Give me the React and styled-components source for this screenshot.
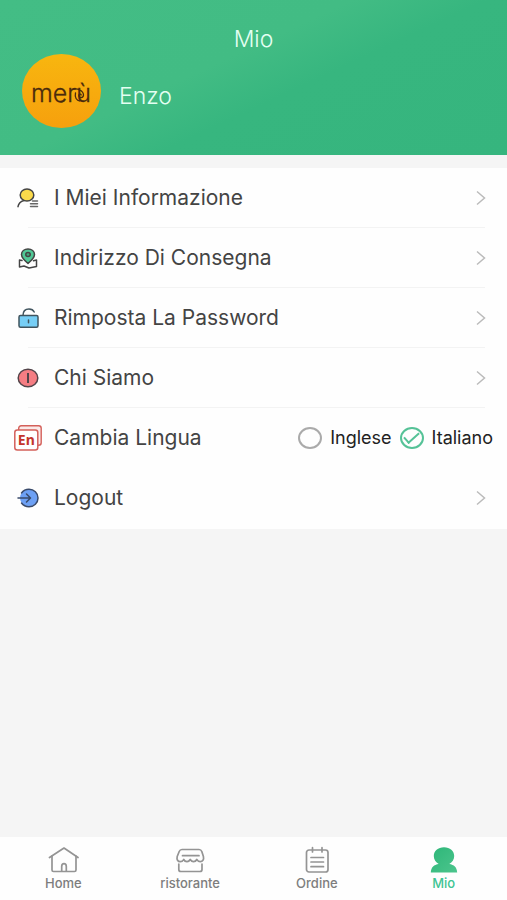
import React, {useState} from 'react'
import styled, {createGlobalStyle} from 'styled-components'


const GlobalStyle = createGlobalStyle`
  * {
    box-sizing: border-box;
  }
  body {
    margin: 0;
    background-color: #f5f5f5;
    font-family: Inter, "Liberation Sans", sans-serif;
    color: #444;
  }
`

const Page = styled.div`
  min-height: 100vh;
  display: flex;
  flex-direction: column;
`

const Header = styled.header`
  padding: 24px 22px 27px;
  background: linear-gradient(155deg, #43bd85 0%, #42bc84 42%, #37b67f 58%, #36b57e 100%);
  color: #e4fff2;
`

const Title = styled.h1`
  margin: 0;
  font-size: 23px;
  line-height: 30px;
  font-weight: 300;
  text-align: center;
`

const Profile = styled.div`
  display: flex;
  align-items: center;
  gap: 18px;
`

const UserName = styled.span`
  padding-top: 10px;
  font-size: 23px;
  line-height: 30px;
  font-weight: 300;
`

const Menu = styled.main`
  margin-top: 13px;
  padding-bottom: 1px;
  background-color: #fefefe;
`

const Row = styled.div`
  display: flex;
  align-items: center;
  width: 100%;
  height: 60px;
  padding: 0 14px;
  color: inherit;
  text-decoration: none;
`

const RowButton = styled(Row)`
  border: 0;
  background: none;
  font-family: inherit;
  text-align: left;
  cursor: pointer;
`

const IconBox = styled.span`
  display: flex;
  justify-content: center;
  width: 28px;
  margin-right: 12px;
`

const Label = styled.span`
  flex: 1;
  font-size: 21px;
  line-height: 28px;
  white-space: nowrap;
`

const ArrowBox = styled.span`
  display: flex;
  margin-right: 6px;
`

const Divider = styled.hr`
  height: 1px;
  margin: -1px 22px 0 28px;
  border: 0;
  background-color: #f3f3f3;
`

const Languages = styled.div`
  display: flex;
  gap: 8px;
`

const Language = styled.label`
  display: flex;
  align-items: center;
  gap: 8px;
  font-size: 18px;
  line-height: 24px;
  color: #222;
  cursor: pointer;
`

const Radio = styled.input`
  appearance: none;
  display: flex;
  justify-content: center;
  align-items: center;
  width: 24px;
  height: 22px;
  margin: 0;
  border: 2px solid #aaa;
  border-radius: 50%;

  &:checked {
    border-color: #55c297;
  }
  &:checked::after {
    content: "";
    width: 13px;
    height: 6px;
    margin-bottom: 4px;
    border: solid #55c297;
    border-width: 0 0 2px 2px;
    transform: rotate(-42deg);
  }
`

const TabBar = styled.nav`
  display: flex;
  height: 63px;
  margin-top: auto;
  background-color: #fefefe;
`

const Tab = styled.a`
  flex: 1;
  display: flex;
  flex-direction: column;
  align-items: center;
  padding-top: 9px;
  font-size: 13px;
  line-height: 18px;
  font-weight: 500;
  color: ${props => props.$active ? '#3fc493' : '#7d7d7d'};
  text-decoration: none;
`

const Logo = () => (
    <svg width="79" height="74" viewBox="0 0 79 74" role="img" aria-label="menù">
        <defs>
            <linearGradient id="logoFill" x1="0" y1="0" x2="0" y2="1">
                <stop offset="0" stopColor="#f8b60f"/>
                <stop offset="1" stopColor="#f6a00d"/>
            </linearGradient>
        </defs>
        <ellipse cx="39.5" cy="37" rx="39.5" ry="37" fill="url(#logoFill)"/>
        <text x="9" y="47.5" fontFamily="Inter, sans-serif" fontSize="25" fontWeight="300" fill="#4a2a0c" stroke="#4a2a0c" strokeWidth=".3">merù</text>
        <g fill="none" stroke="#4a2a0c" strokeLinecap="round">
            <path d="M51.5 35.2C55 34 61.5 36.5 61.5 41C61.5 44.2 56.8 44.4 56.8 41.6C56.8 40 58.8 39.6 59.2 41" strokeWidth="1.3"/>
            <path d="M53.5 39C52.5 43.5 54.5 46.5 58 47" strokeWidth="1.3"/>
        </g>
    </svg>
)

const UserInfoIcon = () => (
    <svg width="22" height="20" viewBox="0 0 22 20" fill="none" stroke="#444" strokeWidth="1.5" strokeLinecap="round">
        <ellipse cx="10" cy="7" rx="6.8" ry="6" fill="#fbda4b"/>
        <path d="M7 12.5C3.5 13.5 1.5 15.5 1 18.7"/>
        <path d="M15.5 13H20.5M13.5 15.8H20.5M13.5 18.5H20.5" stroke="#666"/>
    </svg>
)

const AddressIcon = () => (
    <svg width="20" height="21" viewBox="0 0 20 21" fill="none" stroke="#444" strokeWidth="1.5" strokeLinejoin="round" strokeLinecap="round">
        <path d="M4 12.5L1.5 12V19L6 18L11 20L18.5 18.5V12L15.5 12.8"/>
        <path d="M10 15.5C6.5 12.5 3.5 9.8 3.5 6.5C3.5 3.3 6.3 1 10 1S16.5 3.3 16.5 6.5C16.5 9.8 13.5 12.5 10 15.5Z" fill="#50c896"/>
        <ellipse cx="10" cy="6.5" rx="2.2" ry="2" fill="#42a97d"/>
    </svg>
)

const LockIcon = () => (
    <svg width="21" height="20" viewBox="0 0 21 20" fill="none" stroke="#40545e" strokeWidth="1.5" strokeLinejoin="round" strokeLinecap="round">
        <path d="M5 7.5C5 3.5 7.2 1 11 1C13.5 1 15.3 2 16.2 4"/>
        <rect x="1" y="7.5" width="19" height="11.7" rx="1.5" fill="#76cef5"/>
        <path d="M10.5 12V14.8"/>
    </svg>
)

const AboutIcon = () => (
    <svg width="22" height="20" viewBox="0 0 22 20" stroke="#53444a" strokeWidth="1.5">
        <ellipse cx="11" cy="10" rx="9.8" ry="8.8" fill="#f57d83"/>
        <path d="M11 5V15" strokeWidth="2"/>
    </svg>
)

const LanguageIcon = () => (
    <svg width="28" height="26" viewBox="0 0 28 26">
        <rect x="4.7" y=".8" width="22.5" height="19.5" rx="2.5" fill="#fbeae9" stroke="#d4605a" strokeWidth="1.4"/>
        <rect x=".8" y="5" width="23" height="20" rx="2.5" fill="#fff" stroke="#d4605a" strokeWidth="1.5"/>
        <text x="12.3" y="19.7" textAnchor="middle" fontFamily="Noto Sans, sans-serif" fontSize="14" fontWeight="700" fill="#c4352c">En</text>
    </svg>
)

const LogoutIcon = () => (
    <svg width="22" height="20" viewBox="0 0 22 20" fill="none" stroke="#38496a" strokeWidth="1.5" strokeLinejoin="round" strokeLinecap="round">
        <ellipse cx="12" cy="10" rx="9" ry="8.5" fill="#6da0f4" stroke="none"/>
        <path d="M4.5 5C6.2 2.6 9 1.2 12 1.2C17 1.2 21 5 21 10S17 18.8 12 18.8C9 18.8 6.2 17.4 4.5 15"/>
        <path d="M1 10H13M9.5 6L13.5 10L9.5 14"/>
    </svg>
)

const Arrow = () => (
    <svg width="12" height="16" viewBox="0 0 12 16" fill="none" stroke="#bbb" strokeWidth="1.5">
        <path d="M2 1.5L9.5 8L2 14.5"/>
    </svg>
)

const HomeIcon = () => (
    <svg width="32" height="28" viewBox="0 0 32 28" fill="none" stroke="#949494" strokeWidth="1.7" strokeLinejoin="round" strokeLinecap="round">
        <path d="M2.5 11.5L17 2L31 11.5"/>
        <path d="M5 10V24Q5 25.5 6.5 25.5H27.5Q29 25.5 29 24V10"/>
        <path d="M14.7 25V20.5Q14.7 17.7 17 17.7T19.3 20.5V25"/>
    </svg>
)

const ShopIcon = () => (
    <svg width="32" height="28" viewBox="0 0 32 28" fill="none" stroke="#949494" strokeWidth="1.7" strokeLinejoin="round" strokeLinecap="round">
        <path d="M8 3.5H25Q27 3.5 27.8 5.5L29.4 10.5C30.2 13.8 28.5 15.7 26.3 15.7C24.5 15.7 23.5 14.5 22.8 13.5C22 15 21 15.7 19.5 15.7C18 15.7 17 14.7 16.2 13.5C15.5 14.7 14.5 15.7 13 15.7C11.5 15.7 10.3 14.7 9.7 13.5C9 15 7.8 15.7 6.2 15.7C3.8 15.7 2.5 13.5 3.2 10.5L5.2 5.5Q6 3.5 8 3.5Z"/>
        <path d="M8.5 9.7H25M4.8 18V23.5Q4.8 25.5 6.8 25.5H26Q28 25.5 28 23.5V18"/>
    </svg>
)

const OrderIcon = () => (
    <svg width="32" height="28" viewBox="0 0 32 28" fill="none" stroke="#949494" strokeWidth="1.7" strokeLinecap="round">
        <rect x="5.5" y="4" width="21.5" height="22" rx="2.5"/>
        <path d="M11.5 1.7V6M21 1.7V6M10 11.5H22.5M10 16H22.5M10 20.7H22.5"/>
    </svg>
)

const PersonIcon = () => (
    <svg width="32" height="28" viewBox="0 0 32 28">
        <defs>
            <linearGradient id="personFill" x1="0" y1="0" x2="1" y2="1">
                <stop offset="0" stopColor="#2db678"/>
                <stop offset="1" stopColor="#4cc58d"/>
            </linearGradient>
        </defs>
        <path d="M16 1.2C10 1.2 5.8 5 5.8 10C5.8 13.5 7.8 16.5 10.7 18C6 18.8 3.2 21 2.8 26.5H29.2C28.8 21 26 18.8 21.3 18C24.2 16.5 26.2 13.5 26.2 10C26.2 5 22 1.2 16 1.2Z" fill="url(#personFill)"/>
    </svg>
)

const menuItems = [
    {label: 'I Miei Informazione', href: '#informazione', Icon: UserInfoIcon},
    {label: 'Indirizzo Di Consegna', href: '#indirizzo', Icon: AddressIcon},
    {label: 'Rimposta La Password', href: '#password', Icon: LockIcon},
    {label: 'Chi Siamo', href: '#chi-siamo', Icon: AboutIcon},
]

const tabs = [
    {label: 'Home', Icon: HomeIcon},
    {label: 'ristorante', Icon: ShopIcon},
    {label: 'Ordine', Icon: OrderIcon},
    {label: 'Mio', Icon: PersonIcon},
]

const App = () => {
    const [language, setLanguage] = useState('Italiano')
    const [tab, setTab] = useState('Mio')

    return (
        <Page>
            <GlobalStyle/>
            <Header>
                <Title>Mio</Title>
                <Profile>
                    <Logo/>
                    <UserName>Enzo</UserName>
                </Profile>
            </Header>
            <Menu>
                {menuItems.map(({label, href, Icon}) => (
                    <React.Fragment key={label}>
                        <Row as="a" href={href}>
                            <IconBox><Icon/></IconBox>
                            <Label>{label}</Label>
                            <ArrowBox><Arrow/></ArrowBox>
                        </Row>
                        <Divider/>
                    </React.Fragment>
                ))}
                <Row role="radiogroup" aria-labelledby="language-label">
                    <IconBox><LanguageIcon/></IconBox>
                    <Label id="language-label">Cambia Lingua</Label>
                    <Languages>
                        {['Inglese', 'Italiano'].map(el => (
                            <Language key={el}>
                                <Radio
                                    type="radio"
                                    name="language"
                                    value={el}
                                    checked={language === el}
                                    onChange={() => setLanguage(el)}
                                />
                                {el}
                            </Language>
                        ))}
                    </Languages>
                </Row>
                <RowButton as="button" type="button">
                    <IconBox><LogoutIcon/></IconBox>
                    <Label>Logout</Label>
                    <ArrowBox><Arrow/></ArrowBox>
                </RowButton>
            </Menu>
            <TabBar>
                {tabs.map(({label, Icon}) => (
                    <Tab
                        key={label}
                        href={`#${label.toLowerCase()}`}
                        $active={tab === label}
                        onClick={() => setTab(label)}
                    >
                        <Icon/>
                        {label}
                    </Tab>
                ))}
            </TabBar>
        </Page>
    )
}

export default App
